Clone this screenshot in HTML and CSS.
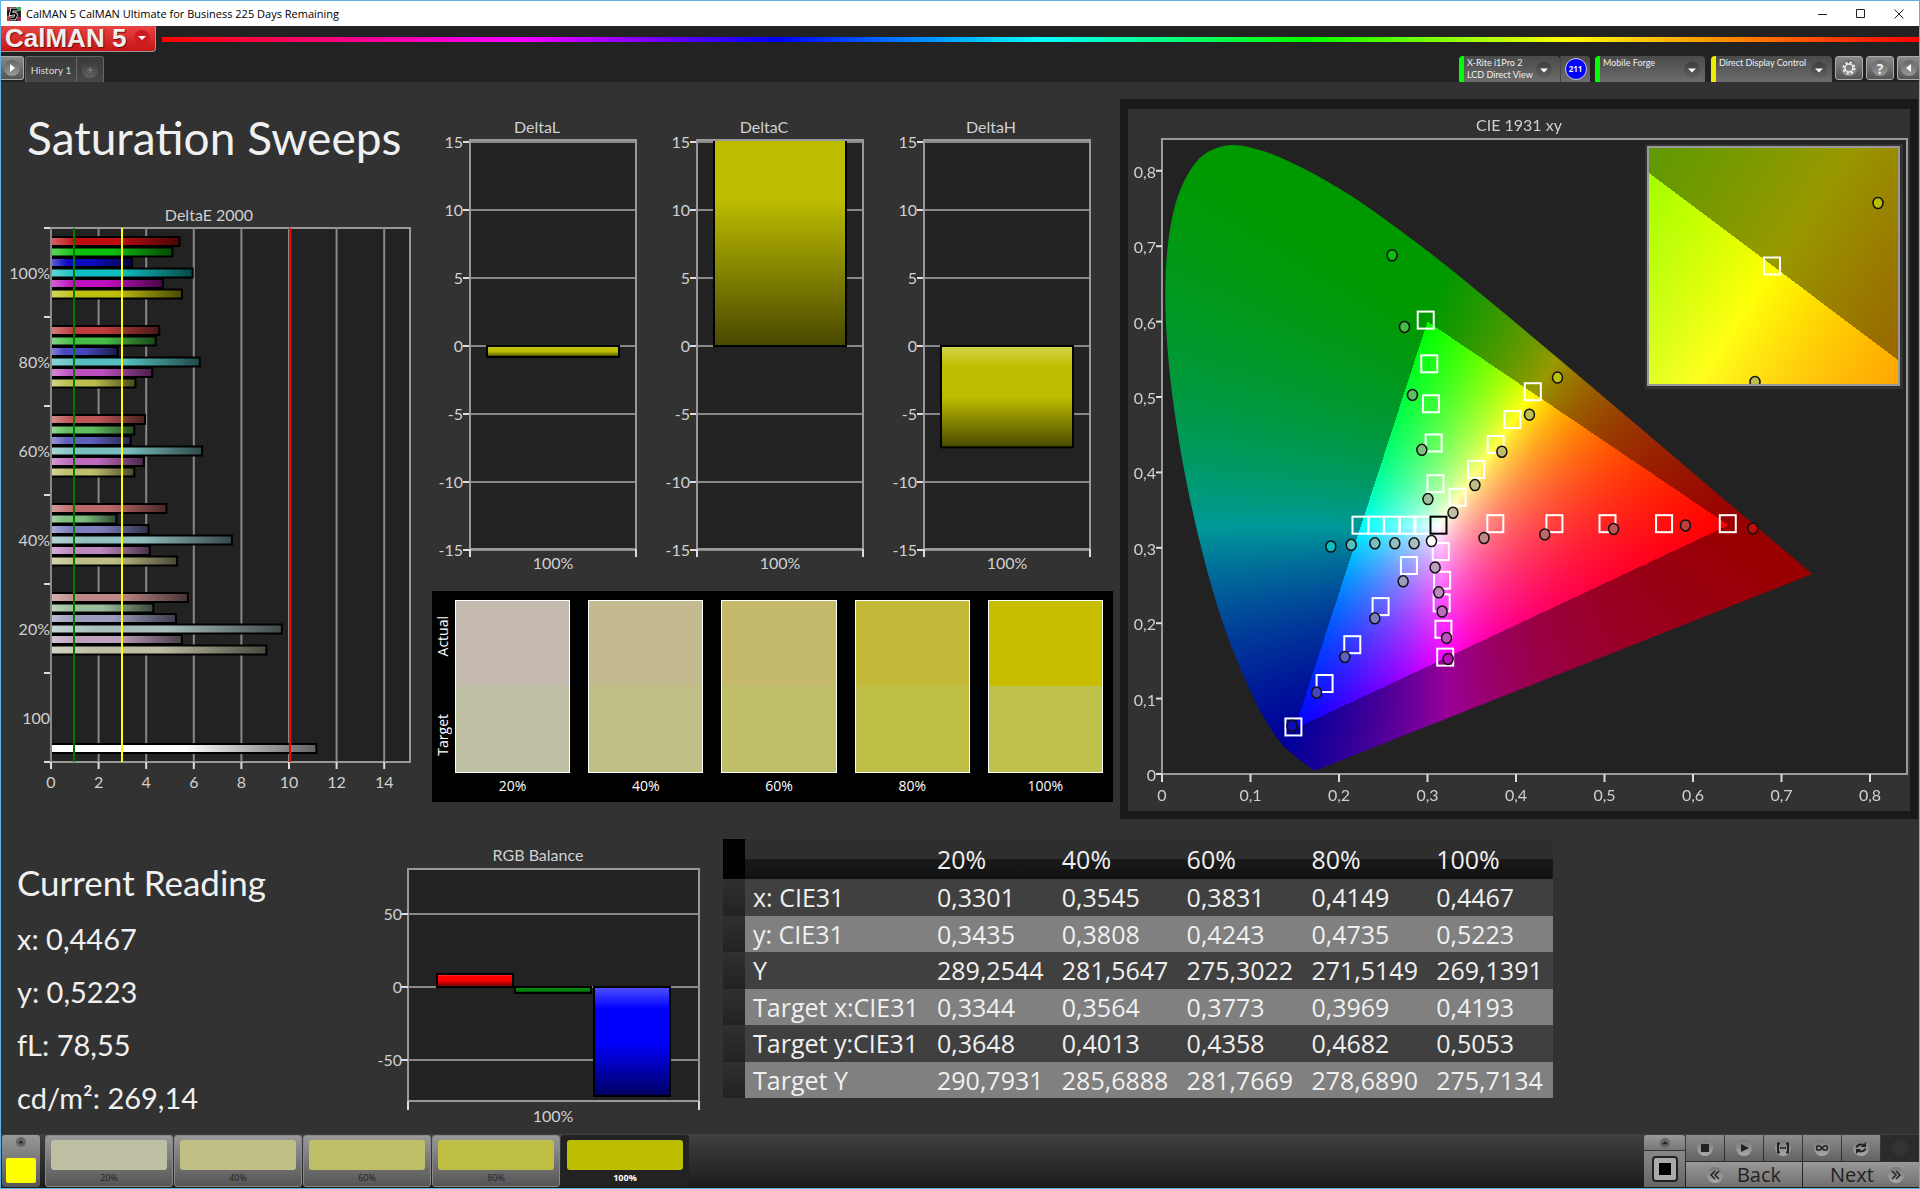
FILE: index.html
```
<!DOCTYPE html>
<html lang="en">
<head>
    <meta charset="utf-8">
    <meta name="viewport" content="width=device-width, initial-scale=1.0">
    <title>CalMAN 5</title>
    <link rel="stylesheet" href="styles.css">
</head>

<body>
    <div class="titlebar">
        <svg class="app-icon" viewBox="0 0 14 14">
            <rect width="14" height="14" fill="#222"/>
            <path d="M0 0h5v3H0z" fill="#a33"/><path d="M9 0h5v4H9z" fill="#3a5"/><path d="M0 9h3v5H0z" fill="#c33"/><path d="M10 10h4v4h-4z" fill="#a24"/>
            <path d="M10.500 2.500H5L4 7q3-1 4.500 0T7.500 11.500H3.500" fill="none" stroke="#fff" stroke-width="3.500"/>
            <path d="M10.500 2.500H5L4 7q3-1 4.500 0T7.500 11.500H3.500" fill="none" stroke="#000" stroke-width="2"/>
        </svg>
        <span class="caption">CalMAN 5 CalMAN Ultimate for Business 225 Days Remaining</span>
        <div class="window-buttons">
            <button aria-label="Minimize"><svg viewBox="0 0 10 10"><path d="M0 5.500h9"/></svg></button>
            <button aria-label="Maximize"><svg viewBox="0 0 10 10"><path d="M.500 .500h8v8h-8z"/></svg></button>
            <button aria-label="Close"><svg viewBox="0 0 10 10"><path d="M.500 .500l9 9M9.500 .500l-9 9"/></svg></button>
        </div>
    </div>

    <div class="header">
        <div class="brand">
            <button class="logo">
                <span>CalMAN 5</span>
                <i class="round red"><svg viewBox="0 0 16 16"><path d="M4 6h8l-4 4z" fill="#fff"/></svg></i>
            </button>
            <div class="rainbow"></div>
        </div>
        <div class="toolbar">
            <button class="square first" aria-label="Open panel"><i class="round"><svg viewBox="0 0 16 16"><path d="M6 4l5 4-5 4z" fill="#fff"/></svg></i></button>
            <div class="tabs">
                <button class="tab">History 1</button>
                <button class="tab add" aria-label="Add tab"><i class="round dark"><svg viewBox="0 0 16 16"><path d="M8 5v6M5 8h6" stroke="#888"/></svg></i></button>
            </div>
            <div class="devices">
                <button class="device meter"><span>X-Rite i1Pro 2<br>LCD Direct View</span><i class="round dark"><svg viewBox="0 0 16 16"><path d="M4 6.500h8l-4 4z" fill="#fff"/></svg></i></button>
                <div class="count"><b>211</b></div>
                <button class="device source"><span>Mobile Forge</span><i class="round dark"><svg viewBox="0 0 16 16"><path d="M4 6.500h8l-4 4z" fill="#fff"/></svg></i></button>
                <button class="device display"><span>Direct Display Control</span><i class="round dark"><svg viewBox="0 0 16 16"><path d="M4 6.500h8l-4 4z" fill="#fff"/></svg></i></button>
                <button class="square" aria-label="Settings"><i class="round"><svg viewBox="0 0 16 16"><circle cx="8" cy="8" r="4" fill="none" stroke="#eee" stroke-width="1.500"/><circle cx="8" cy="8" r="5.500" fill="none" stroke="#eee" stroke-width="2" stroke-dasharray="2.160 2.160"/></svg></i></button>
                <button class="square help" aria-label="Help"><i class="round">?</i></button>
                <button class="square last" aria-label="Hide panel"><i class="round"><svg viewBox="0 0 16 16"><path d="M10 4l-5 4 5 4z" fill="#fff"/></svg></i></button>
            </div>
        </div>
    </div>

    <div class="main">
        <div class="row-top">
            <div class="sweeps">
                <h1>Saturation Sweeps</h1>
                <svg id="deltaE" class="chart" viewBox="0 0 431 600"></svg>
            </div>
            <div class="middle">
                <div class="deltas">
                    <svg id="deltaL" class="chart" viewBox="0 0 227 460"></svg>
                    <svg id="deltaC" class="chart" viewBox="0 0 227 460"></svg>
                    <svg id="deltaH" class="chart" viewBox="0 0 227 460"></svg>
                </div>
                <div class="swatches">
                    <div class="side"><span>Actual</span><span>Target</span></div>
                    <div class="swatch"><div class="pair s20"></div>20%</div>
                    <div class="swatch"><div class="pair s40"></div>40%</div>
                    <div class="swatch"><div class="pair s60"></div>60%</div>
                    <div class="swatch"><div class="pair s80"></div>80%</div>
                    <div class="swatch"><div class="pair s100"></div>100%</div>
                </div>
            </div>
            <div class="cie">
                <canvas id="gamut" width="782" height="702"></canvas>
                <svg id="cieChart" class="chart" viewBox="0 0 782 702"></svg>
            </div>
        </div>

        <div class="row-bottom">
            <div class="reading">
                <h2>Current Reading</h2>
                <p>x: 0,4467</p>
                <p>y: 0,5223</p>
                <p>fL: 78,55</p>
                <p>cd/m²: 269,14</p>
            </div>
            <svg id="rgbBalance" class="chart" viewBox="0 0 356 294"></svg>
            <div class="results">
                <table>
                    <thead>
                        <tr><th class="grip"></th><th class="name"></th><th>20%</th><th>40%</th><th>60%</th><th>80%</th><th>100%</th></tr>
                    </thead>
                    <tbody>
                        <tr><td class="grip"></td><td>x: CIE31</td><td>0,3301</td><td>0,3545</td><td>0,3831</td><td>0,4149</td><td>0,4467</td></tr>
                        <tr><td class="grip"></td><td>y: CIE31</td><td>0,3435</td><td>0,3808</td><td>0,4243</td><td>0,4735</td><td>0,5223</td></tr>
                        <tr><td class="grip"></td><td>Y</td><td>289,2544</td><td>281,5647</td><td>275,3022</td><td>271,5149</td><td>269,1391</td></tr>
                        <tr><td class="grip"></td><td>Target x:CIE31</td><td>0,3344</td><td>0,3564</td><td>0,3773</td><td>0,3969</td><td>0,4193</td></tr>
                        <tr><td class="grip"></td><td>Target y:CIE31</td><td>0,3648</td><td>0,4013</td><td>0,4358</td><td>0,4682</td><td>0,5053</td></tr>
                        <tr><td class="grip"></td><td>Target Y</td><td>290,7931</td><td>285,6888</td><td>281,7669</td><td>278,6890</td><td>275,7134</td></tr>
                    </tbody>
                </table>
            </div>
        </div>
    </div>

    <div class="footer">
        <button class="current" aria-label="Current patch"><i class="round small"><svg viewBox="0 0 16 16"><path d="M4 10h8L8 5z" fill="#222"/></svg></i><span class="patch"></span></button>
        <div class="steps">
            <button class="step"><span class="color t20"></span>20%</button>
            <button class="step"><span class="color t40"></span>40%</button>
            <button class="step"><span class="color t60"></span>60%</button>
            <button class="step"><span class="color t80"></span>80%</button>
            <button class="step active"><span class="color t100"></span>100%</button>
        </div>
        <div class="transport">
            <div class="stopper">
                <button class="up" aria-label="Expand"><i class="round small"><svg viewBox="0 0 16 16"><path d="M3 10h10L8 5z" fill="#222"/></svg></i></button>
                <button class="stop" aria-label="Stop all"><span></span></button>
            </div>
            <div class="controls">
                <button aria-label="Stop"><i class="round"><svg viewBox="0 0 16 16"><path d="M4 4h8v8H4z" fill="#222"/></svg></i></button>
                <button aria-label="Play"><i class="round"><svg viewBox="0 0 16 16"><path d="M5 4l8 4-8 4z" fill="#222"/></svg></i></button>
                <button aria-label="Read series"><i class="round"><svg viewBox="0 0 16 16"><path d="M5 3.500H3v9h2M11 3.500h2v9h-2" fill="none" stroke="#222" stroke-width="2"/><path d="M5 8h6" stroke="#222" stroke-width="2" stroke-dasharray="1.500 .700"/></svg></i></button>
                <button aria-label="Read continuous"><i class="round"><svg viewBox="0 0 16 16"><path d="M8 8C6 5 2.500 5 2.500 8S6 11 8 8s5.500-3 5.500 0S10 11 8 8z" fill="none" stroke="#222" stroke-width="1.500"/></svg></i></button>
                <button aria-label="Refresh"><i class="round"><svg viewBox="0 0 16 16"><path d="M3.500 7.500Q5 3.500 11 5M12.500 8.500Q11 12.500 5 11" fill="none" stroke="#222" stroke-width="2"/><path d="M13 2v5H8zM3 14V9h5z" fill="#222"/></svg></i></button>
                <button class="off" aria-label="Idle"><i class="round"></i></button>
                <button class="nav"><i class="round"><svg viewBox="0 0 16 16"><path d="M8 4L4 8l4 4M12 4L8 8l4 4" fill="none" stroke="#222" stroke-width="1.500"/></svg></i>Back</button>
                <button class="nav next">Next<i class="round"><svg viewBox="0 0 16 16"><path d="M4 4l4 4-4 4M8 4l4 4-4 4" fill="none" stroke="#222" stroke-width="1.500"/></svg></i></button>
            </div>
        </div>
    </div>

    <script src="script.js"></script>
</body>
</html>
```
FILE: styles.css
```
* {
    box-sizing: border-box;
}

body {
    margin: 0;
    min-height: 100vh;
    display: flex;
    flex-direction: column;
    border: 1px solid #5fb2e6;
    background-color: #323232;
    color: #f0f0f0;
    font-family: Lato, "Open Sans", sans-serif;
}

button {
    margin: 0;
    padding: 0;
    border: 0;
    background: none;
    color: inherit;
    font-family: inherit;
}

/* window caption */
.titlebar {
    height: 25px;
    display: flex;
    align-items: center;
    gap: 5px;
    padding-left: 6px;
    background-color: #fff;
    color: #000;
    font-family: "Open Sans", sans-serif;
    font-size: 11px;
}

.app-icon {
    width: 14px;
    height: 14px;
}

.window-buttons {
    margin-left: auto;
    display: flex;
    padding-right: 1px;
}

.window-buttons button {
    width: 38px;
    height: 24px;
    display: flex;
    align-items: center;
    justify-content: center;
}

.window-buttons svg {
    width: 10px;
    height: 10px;
    fill: none;
    stroke: #222;
}

/* brand line and toolbar */
.header {
    background-color: #222;
}

.brand {
    height: 30px;
    display: flex;
    align-items: flex-start;
    gap: 6px;
}

.logo {
    width: 155px;
    height: 26px;
    display: flex;
    align-items: center;
    justify-content: space-between;
    padding: 0 5px 2px 4px;
    background: linear-gradient(#e84545, #c81414);
    border-bottom: 1px solid #999;
    border-right: 1px solid #999;
    border-radius: 0 0 4px 0;
    color: #eee;
    font-family: "Liberation Sans", sans-serif;
    font-size: 26px;
    font-weight: bold;
    line-height: 22px;
    text-shadow: 1px 1px 1px #611;
}

.rainbow {
    flex: 1;
    height: 5px;
    margin-top: 11px;
    background: linear-gradient(to right, #f00, #f0f 20%, #00f 35%, #0ff 50%, #0f0 65%, #ff0 80%, #f00);
}

.round {
    flex: none;
    width: 16px;
    height: 16px;
    display: flex;
    border-radius: 50%;
    background: linear-gradient(#666, #999);
}

.round svg {
    width: 100%;
    height: 100%;
}

.round.red {
    background: #d01c20;
}

.round.dark {
    background: linear-gradient(#3c3c3c, #626262);
}

.round.small {
    width: 10px;
    height: 10px;
    background: #666;
}

.toolbar {
    height: 26px;
    display: flex;
}

.square {
    width: 28px;
    height: 24px;
    display: flex;
    align-items: center;
    justify-content: center;
    border: 1px solid #aaa;
    border-radius: 3px;
    background: linear-gradient(#8a8a8a, #555);
}

.square.first {
    width: 23px;
    border-left: 0;
    border-radius: 0 3px 3px 0;
}

.square.last {
    width: 22px;
    border-right: 0;
    border-radius: 3px 0 0 3px;
}

.square.help .round {
    align-items: center;
    justify-content: center;
    font-family: "Open Sans", sans-serif;
    font-size: 14px;
    font-style: normal;
    font-weight: bold;
}

.tabs {
    display: flex;
    margin-left: 1px;
    border: 1px solid #666;
    border-bottom: 0;
    border-radius: 3px 3px 0 0;
    background: linear-gradient(#3a3a3a, #484848);
}

.tab {
    width: 50px;
    font-size: 10px;
    color: #ddd;
}

.tab.add {
    width: 27px;
    display: flex;
    align-items: center;
    justify-content: center;
    border-left: 1px solid #666;
}

.devices {
    margin-left: auto;
    display: flex;
    gap: 3px;
}

.device {
    height: 26px;
    display: flex;
    justify-content: space-between;
    align-items: flex-end;
    padding: 1px 5px 4px 3px;
    border-left: 5px solid #0f0;
    border-radius: 4px 4px 0 0;
    background: linear-gradient(#4a4a4a, #6c6c6c);
    font-size: 9px;
    line-height: 12px;
    text-align: left;
    white-space: nowrap;
}

.device span {
    align-self: flex-start;
}

.meter {
    width: 101px;
    padding-right: 8px;
}

.source {
    width: 110px;
    margin-left: 2px;
}

.display {
    width: 121px;
    margin-left: 3px;
    border-left-color: #ee0;
}

.count {
    width: 30px;
    display: flex;
    align-items: center;
    justify-content: center;
    background: linear-gradient(#4a4a4a, #6c6c6c);
    border-left: 1px solid #444;
    border-radius: 0 4px 0 0;
    margin-left: -3px;
}

.count b {
    width: 22px;
    height: 22px;
    border: 1px solid #ccd;
    border-radius: 50%;
    background-color: #00f;
    font-family: "Open Sans", sans-serif;
    font-size: 8px;
    line-height: 20px;
    text-align: center;
}

/* page body */
.main {
    flex: 1;
}

.row-top {
    display: grid;
    grid-template-columns: 431fr 688fr 799fr;
    align-items: start;
}

.row-bottom {
    display: grid;
    grid-template-columns: 366fr 356fr 1196fr;
    align-items: start;
    margin-top: 19px;
}

.chart {
    display: block;
    width: 100%;
    height: auto;
    font-size: 16px;
    fill: #d0d0d0;
}

.chart .plot {
    fill: #222;
    stroke: #999;
    stroke-width: 2;
}

.chart .frame {
    fill: none;
    stroke: #999;
    stroke-width: 2;
}

.chart .grid {
    stroke: #888;
    stroke-width: 2;
}

.chart .tick {
    stroke: #ddd;
    stroke-width: 2;
}

.chart .middle-text {
    text-anchor: middle;
}

.chart .end-text {
    text-anchor: end;
}

h1 {
    margin: 0;
    padding: 26px 0 0 26px;
    height: 118px;
    font-size: 46px;
    line-height: 60px;
    font-weight: normal;
    white-space: nowrap;
}

.middle {
    padding: 33px 7px 0 0;
}

.deltas {
    display: grid;
    grid-template-columns: repeat(3, 1fr);
}

.swatches {
    display: flex;
    gap: 18px;
    margin-top: 16px;
    padding: 9px 10px 0 0;
    height: 211px;
    background-color: #000;
    color: #fff;
    font-family: "Open Sans", sans-serif;
    font-size: 14px;
    line-height: 26px;
}

.side {
    width: 23px;
    margin-right: -18px;
    display: flex;
    flex-direction: column;
    justify-content: space-between;
    height: 172px;
    padding: 16px 0;
}

.side span {
    writing-mode: vertical-rl;
    transform: rotate(180deg);
    line-height: 22px;
}

.swatch {
    flex: 1;
    text-align: center;
}

.pair {
    height: 173px;
    border: 1px solid #fff;
}

.s20 { background: linear-gradient(#c5bab0 50%, #bfbfa4 50%); }
.s40 { background: linear-gradient(#c4ba90 50%, #bfbf86 50%); }
.s60 { background: linear-gradient(#c5b96b 50%, #bfbf69 50%); }
.s80 { background: linear-gradient(#c4b839 50%, #bebe47 50%); }
.s100 { background: linear-gradient(#c9bd00 50%, #bfc14d 50%); }

.cie {
    display: grid;
    margin: 17px 1px 0 0;
    border: 8px solid #191919;
    border-top-width: 10px;
}

.cie canvas,
.cie svg {
    grid-area: 1 / 1;
    width: 100%;
}

.reading {
    padding: 16px 0 0 16px;
}

.reading h2 {
    margin: 0 0 2px;
    font-size: 35px;
    line-height: 56px;
    font-weight: normal;
}

.reading p {
    margin: 0;
    font-size: 29px;
    line-height: 53px;
}

/* measurement table */
.results {
    padding-top: 1px;
}

.results table {
    border-collapse: collapse;
    height: 259px;
    table-layout: fixed;
    width: 830px;
    max-width: 100%;
    font-family: "Open Sans", sans-serif;
    font-size: 25px;
    line-height: 30px;
    text-align: left;
}

.results th,
.results td {
    padding: 0 0 0 8px;
    font-weight: normal;
    white-space: nowrap;
}

.results thead tr {
    height: 40px;
    background: linear-gradient(#2e2e2e 50%, #1a1a1a 50%, #121212);
}

.results th.grip {
    width: 22px;
    padding: 0;
    background-color: #000;
}

.results th.name {
    width: 184px;
}

.results tbody tr {
    background-color: #404040;
}

.results tbody tr:nth-child(even) {
    background-color: #808080;
}

.results td.grip {
    padding: 0;
    background: linear-gradient(#303030, #222);
}

/* bottom strip */
.footer {
    height: 54px;
    display: flex;
    gap: 5px;
    padding: 1px 0 1px 1px;
    background: linear-gradient(#404040, #1c1c1c);
}

.current {
    width: 38px;
    display: flex;
    flex-direction: column;
    align-items: center;
    justify-content: space-between;
    padding: 2px 0 4px;
    border-radius: 3px;
    background: linear-gradient(#999, #555);
}

.patch {
    width: 30px;
    height: 25px;
    border-radius: 2px;
    background-color: #ff0;
}

.steps {
    display: flex;
    gap: 1px;
}

.step {
    width: 128px;
    padding: 4px 5px 0;
    border: 1px solid #888;
    border-radius: 3px;
    background: linear-gradient(#999, #555);
    color: #222;
    font-family: "Open Sans", sans-serif;
    font-size: 9px;
    line-height: 16px;
}

.step.active {
    border-color: #222;
    background: #222;
    color: #fff;
    font-weight: bold;
}

.color {
    display: block;
    height: 30px;
    border-radius: 3px;
}

.t20 { background-color: #bfbfa4; }
.t40 { background-color: #bfbf86; }
.t60 { background-color: #bfbf69; }
.t80 { background-color: #bebe47; }
.t100 { background-color: #bebe00; }

.transport {
    margin-left: auto;
    display: flex;
    gap: 1px;
}

.stopper {
    width: 41px;
    display: flex;
    flex-direction: column;
    gap: 1px;
}

.stopper button {
    display: flex;
    align-items: center;
    justify-content: center;
    background: linear-gradient(#999, #777);
}

.stopper .up {
    height: 15px;
    border-radius: 3px 3px 0 0;
}

.stopper .stop {
    flex: 1;
    background: linear-gradient(#888, #666);
}

.stop span {
    width: 26px;
    height: 26px;
    border: 2px solid #222;
    border-radius: 4px;
    background: linear-gradient(#000, #000) center / 12px 12px no-repeat #aaa;
}

.controls {
    display: grid;
    grid-template-columns: repeat(6, 38px);
    grid-template-rows: 26px 1fr;
    gap: 1px;
    color: #222;
    font-family: "Open Sans", sans-serif;
}

.controls button {
    display: flex;
    align-items: center;
    justify-content: center;
    background: linear-gradient(#8c8c8c, #626262);
}

.controls .round {
    background: linear-gradient(#777, #aaa);
}

.controls .nav {
    grid-column: span 3;
    gap: 14px;
    font-size: 20px;
    line-height: 24px;
    background: linear-gradient(#999, #707070);
}

.controls .next {
    padding-left: 12px;
}

.controls .off {
    background: #2b2b2b;
}

.controls .off .round {
    background: #333;
}
```
FILE: script.js
```
var defs = '<defs>' +
    '<linearGradient id="shadeV" x1="0" y1="0" x2="0" y2="1"><stop offset="0" stop-color="#fff" stop-opacity=".32"/><stop offset=".2" stop-color="#fff" stop-opacity="0"/><stop offset=".5" stop-color="#000" stop-opacity="0"/><stop offset="1" stop-color="#000" stop-opacity=".62"/></linearGradient>' +
    '<linearGradient id="shadeH"><stop offset="0" stop-color="#fff" stop-opacity=".35"/><stop offset=".2" stop-color="#fff" stop-opacity="0"/><stop offset=".5" stop-color="#000" stop-opacity="0"/><stop offset="1" stop-color="#000" stop-opacity=".62"/></linearGradient>' +
    '</defs>';

// one hue per column, saturation 100% down to 20%
var tones = [
    ["#be0e10", "#0fbe0f", "#0c0cbe", "#0fbebe", "#be0fbe", "#bebe0f"],
    ["#be3c3c", "#46be46", "#4646be", "#55bebe", "#be50be", "#bebe50"],
    ["#be5555", "#5fbe5f", "#5f5fbe", "#78bebe", "#be69be", "#bebe6c"],
    ["#be6969", "#7dbe7d", "#7d7dbe", "#91bebe", "#be87be", "#bebe87"],
    ["#be8787", "#9bbe9b", "#9b9bbe", "#a8bebe", "#bea0be", "#bebea5"]
];

function line(x1, y1, x2, y2, cls) {
    return '<path class="' + cls + '" d="M' + x1 + ' ' + y1 + 'L' + x2 + ' ' + y2 + '"/>';
}

function text(x, y, cls, s) {
    return '<text class="' + cls + '" x="' + x + '" y="' + y + '">' + s + '</text>';
}

function bar(x, y, w, h, color, shade) {
    var box = 'x="' + x + '" y="' + y + '" width="' + w + '" height="' + h + '"';
    return '<rect ' + box + ' fill="' + color + '"/><rect ' + box + ' fill="url(#' + shade + ')" stroke="#000" stroke-width="2"/>';
}

function drawDeltaE() {
    var left = 50, top = 28, right = 409, bottom = 562, unit = 23.8, step = 89;
    var groups = [
        [5.4, 5.1, 3.4, 5.95, 4.7, 5.5],
        [4.55, 4.4, 2.8, 6.25, 4.25, 3.55],
        [3.95, 3.5, 3.35, 6.35, 3.9, 3.5],
        [4.85, 2.75, 4.1, 7.6, 4.15, 5.3],
        [5.75, 4.3, 5.25, 9.7, 5.5, 9.05]
    ];
    var names = ["100%", "80%", "60%", "40%", "20%", "100"];
    var s = defs + text(208, 21, "middle-text", "DeltaE 2000");
    s += '<rect class="plot" x="' + left + '" y="' + top + '" width="' + (right - left) + '" height="' + (bottom - top) + '"/>';
    for (var v = 0; v <= 14; v += 2) {
        var x = left + v * unit;
        s += line(x, top, x, bottom, "grid") + line(x, bottom, x, bottom + 7, "tick");
        s += text(x, bottom + 26, "middle-text", v);
    }
    for (var g = 0; g <= 6; g++) {
        s += line(left - 7, top + g * step, left - 1, top + g * step, "tick");
        if (g < 6) s += text(left - 1, top + g * step + 51, "end-text", names[g]);
    }
    for (g = 0; g < groups.length; g++) {
        for (var i = 0; i < 6; i++) {
            s += bar(left, top + g * step + 9 + i * 10.5, groups[g][i] * unit, 9, tones[g][i], "shadeH");
        }
    }
    s += bar(left, 544, 11.15 * unit, 9, "#fff", "shadeH");
    s += line(left, top, left, bottom, "grid");
    s += '<path d="M73 28V562" stroke="#007800" stroke-width="2"/><path d="M121 28V562" stroke="#ff0" stroke-width="2"/><path d="M289 28V562" stroke="#f00" stroke-width="2"/>';
    document.getElementById("deltaE").innerHTML = s;
}

function drawDelta(id, title, value) {
    var left = 38, right = 204, top = 25, bottom = 434, zero = 231, unit = 13.6;
    var s = defs + text(105, 18, "middle-text", title);
    s += '<rect class="plot" x="' + left + '" y="' + top + '" width="166" height="' + (bottom - top) + '"/>';
    for (var v = 15; v >= -15; v -= 5) {
        var y = zero - v * unit;
        s += line(left, y, right, y, "grid") + line(left - 7, y, left, y, "tick");
        s += text(left - 7, y + 6, "end-text", v);
    }
    var h = Math.abs(value) * unit;
    s += '<clipPath id="' + id + 'Clip"><rect x="' + left + '" y="' + top + '" width="166" height="409"/></clipPath>';
    s += '<g clip-path="url(#' + id + 'Clip)">' + bar(55, value > 0 ? zero - h : zero, 132, h, "#bebe00", "shadeV") + '</g>';
    s += '<rect class="frame" x="' + left + '" y="' + top + '" width="166" height="409"/>';
    s += line(left, bottom, left, bottom + 8, "tick") + line(right, bottom, right, bottom + 8, "tick");
    s += text(121, 454, "middle-text", "100%");
    document.getElementById(id).innerHTML = s;
}

function drawRgb() {
    var left = 41, right = 332, top = 31, bottom = 263, zero = 149;
    var s = defs + text(171, 23, "middle-text", "RGB Balance");
    s += '<rect class="plot" x="' + left + '" y="' + top + '" width="291" height="232"/>';
    [50, 0, -50].forEach(function (v) {
        var y = zero - v * 1.46;
        s += line(left, y, right, y, "grid") + line(left - 7, y, left, y, "tick") + text(left - 6, y + 6, "end-text", v);
    });
    s += bar(70, 136, 76, 13, "#f00", "shadeV") + bar(148, 149, 76, 6, "#008a10", "shadeV") + bar(227, 149, 76, 109, "#00f", "shadeV");
    s += line(left, bottom, left, bottom + 9, "tick") + line(right, bottom, right, bottom + 9, "tick");
    s += text(186, 284, "middle-text", "100%");
    document.getElementById("rgbBalance").innerHTML = s;
}

// spectral locus, CIE 1931 2 degree observer
var locus = [
    [.1741, .005], [.1714, .0051], [.1644, .0109], [.1566, .0177], [.144, .0297], [.1355, .0399], [.1241, .0578],
    [.1096, .0868], [.0913, .1327], [.0687, .2007], [.0454, .295], [.0235, .4127], [.0082, .5384], [.0039, .6548],
    [.0139, .7502], [.0389, .812], [.0743, .8338], [.1142, .8262], [.1547, .8059], [.1929, .7816], [.2296, .7543],
    [.3016, .6923], [.3731, .6245], [.4441, .5547], [.5125, .4866], [.5752, .4242], [.627, .3725], [.6658, .334],
    [.6915, .3083], [.719, .2809], [.7347, .2653]
];

// target squares and measured dots, red to yellow as in tones, 100% first
var targets = [
    [[.6393, .332], [.5673, .332], [.5034, .332], [.4434, .332], [.3766, .332]],
    [[.298, .602], [.302, .544], [.304, .491], [.307, .439], [.309, .385]],
    [[.1485, .0624], [.1837, .12], [.215, .1715], [.247, .222], [.279, .2765]],
    [[.2243, .33], [.242, .33], [.2597, .33], [.2774, .33], [.2943, .33]],
    [[.32, .155], [.318, .192], [.316, .227], [.3165, .257], [.315, .295]],
    [[.419, .507], [.396, .47], [.377, .437], [.355, .404], [.334, .367]]
];
var measured = [
    [[.6676, .3257], [.5915, .3296], [.5103, .325], [.4325, .3177], [.3639, .313]],
    [[.26, .688], [.274, .593], [.283, .5027], [.2936, .43], [.3005, .3646]],
    [[.1467, .064], [.1747, .108], [.2066, .1552], [.2405, .2065], [.2725, .2555]],
    [[.1908, .3017], [.2138, .304], [.2405, .306], [.2631, .306], [.2849, .306]],
    [[.3233, .1526], [.3215, .1805], [.3165, .2155], [.3128, .241], [.3086, .274]],
    [[.4469, .5257], [.4152, .4765], [.384, .4274], [.3536, .3832], [.3288, .3465]]
];

function px(x) { return 34 + x * 885; }
function py(y) { return 665 - y * 754; }

function paint(image, w, h, toX, toY) {
    for (var j = 0; j < h; j++) {
        for (var i = 0; i < w; i++) {
            var x = toX(i + .5), y = Math.max(toY(j + .5), .0001);
            var X = x / y, Z = (1 - x - y) / y;
            var r = 3.2406 * X - 1.5372 - .4986 * Z;
            var g = -.9689 * X + 1.8758 + .0415 * Z;
            var b = .0557 * X - .204 + 1.057 * Z;
            var level = Math.min(r, g, b) < 0 ? 153 : 255;
            var m = Math.max(r, g, b), p = (j * w + i) * 4;
            image.data[p] = Math.max(r, 0) / m * level;
            image.data[p + 1] = Math.max(g, 0) / m * level;
            image.data[p + 2] = Math.max(b, 0) / m * level;
            image.data[p + 3] = 255;
        }
    }
}

function drawGamut() {
    var canvas = document.getElementById("gamut");
    var ctx = canvas.getContext("2d");
    var image = ctx.createImageData(782, 702);
    paint(image, 782, 702, function (i) { return (i - 34) / 885; }, function (j) { return (665 - j) / 754; });
    ctx.putImageData(image, 0, 0);

    // smooth curve through the locus points
    ctx.globalCompositeOperation = "destination-in";
    ctx.beginPath();
    var last = locus.length - 1;
    ctx.moveTo(px(locus[0][0]), py(locus[0][1]));
    for (var n = 0; n < last; n++) {
        var o = locus[Math.max(n - 1, 0)], a = locus[n], b = locus[n + 1], c = locus[Math.min(n + 2, last)];
        ctx.bezierCurveTo(
            px(a[0] + (b[0] - o[0]) / 6), py(a[1] + (b[1] - o[1]) / 6),
            px(b[0] - (c[0] - a[0]) / 6), py(b[1] - (c[1] - a[1]) / 6),
            px(b[0]), py(b[1]));
    }
    ctx.closePath();
    ctx.fill();

    ctx.globalCompositeOperation = "destination-over";
    ctx.fillStyle = "#222";
    ctx.fillRect(34, 30, 745, 635);

    // magnified view round the selected target
    ctx.globalCompositeOperation = "source-over";
    ctx.fillStyle = "#323232";
    ctx.fillRect(517, 35, 258, 245);
    var inset = ctx.createImageData(251, 237);
    paint(inset, 251, 237, function (i) { return .4193 + (i - 125) / 3870; }, function (j) { return .5053 - (j - 118) / 3660; });
    ctx.putImageData(inset, 520, 39);
}

function square(x, y, color) {
    return '<rect x="' + (x - 8) + '" y="' + (y - 8.5) + '" width="16" height="17" fill="none" stroke="' + color + '" stroke-width="2"/>';
}

function dot(x, y, color) {
    return '<ellipse cx="' + x + '" cy="' + y + '" rx="5" ry="5.500" fill="' + color + '" stroke="#111" stroke-width="1.500"/>';
}

function drawCie() {
    var s = text(391, 22, "middle-text", "CIE 1931 xy");
    s += '<rect class="frame" x="34" y="30" width="745" height="635"/>';
    for (var n = 0; n <= 8; n++) {
        var label = n ? "0," + n : "0";
        s += line(px(n / 10), 665, px(n / 10), 673, "tick") + text(px(n / 10), 692, "middle-text", label);
        s += line(28, py(n / 10), 34, py(n / 10), "tick") + text(28, py(n / 10) + 7, "end-text", label);
    }
    for (var h = 0; h < 6; h++) {
        for (n = 4; n >= 0; n--) s += square(px(targets[h][n][0]), py(targets[h][n][1]), "#fff");
    }
    s += square(px(.3124), py(.33), "#000");
    for (h = 0; h < 6; h++) {
        for (n = 4; n >= 0; n--) s += dot(px(measured[h][n][0]), py(measured[h][n][1]), tones[n][h]);
    }
    s += dot(px(.3045), py(.309), "#fff");
    s += '<clipPath id="insetClip"><rect x="520" y="39" width="251" height="237"/></clipPath>';
    s += '<g clip-path="url(#insetClip)">' + square(644, 157, "#fff") + dot(750, 94, "#bebe00") + dot(627, 273, "#bebe50") + '</g>';
    s += '<rect class="frame" x="520" y="38" width="251" height="238"/>';
    document.getElementById("cieChart").innerHTML = s;
}

drawDeltaE();
drawDelta("deltaL", "DeltaL", -.8);
drawDelta("deltaC", "DeltaC", 22);
drawDelta("deltaH", "DeltaH", -7.45);
drawRgb();
drawGamut();
drawCie();
```
